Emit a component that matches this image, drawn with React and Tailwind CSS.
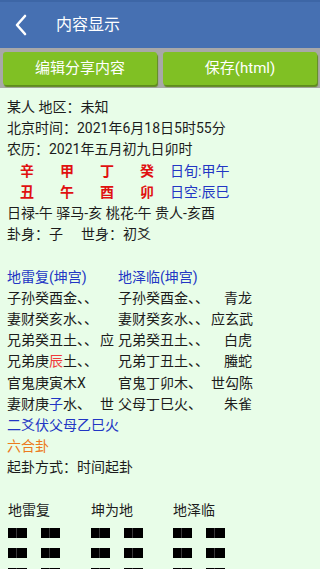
import React from "react";

const FONT = { fontFamily: 'Roboto, "Noto Sans CJK SC", "Noto Sans", sans-serif' };

function Yin() {
  return (
    <div className="flex gap-[14px]">
      <div className="flex w-[19px] h-[10px]">
        <div className="w-[9px] h-full bg-black border-r border-[#3a3a3a]" />
        <div className="w-[10px] h-full bg-black" />
      </div>
      <div className="flex w-[19px] h-[10px]">
        <div className="w-[9px] h-full bg-black border-r border-[#3a3a3a]" />
        <div className="w-[10px] h-full bg-black" />
      </div>
    </div>
  );
}

function Yang() {
  return <div className="w-[52px] h-[10px] bg-black" />;
}

function Hex({ lines }) {
  return (
    <div className="flex flex-col gap-[10px]">
      {lines.map((l, i) => (l ? <Yang key={i} /> : <Yin key={i} />))}
    </div>
  );
}

function YaoRow({ a, m, b, c }) {
  return (
    <div className="flex whitespace-pre">
      <span className="w-[93px]">{a}</span>
      <span className="w-[18px]">{m}</span>
      <span className="w-[93px]">{b}</span>
      <span className="w-[41px] text-right">{c}</span>
    </div>
  );
}

export default function App() {
  return (
    <div className="w-[320px] h-[569px] overflow-hidden bg-[#e8fde8]" style={FONT}>
      <div className="h-[48px] bg-[#4670b2] flex items-center border-t-2 border-[#3d66a6]">
        <svg width="14" height="22" viewBox="0 0 14 22" className="ml-[14px]">
          <path d="M11 2 L3 11 L11 20" fill="none" stroke="white" strokeWidth="2.6" strokeLinecap="round" strokeLinejoin="round" />
        </svg>
        <span className="ml-[28px] text-white text-[16px] leading-none">内容显示</span>
      </div>
      <div className="h-[40px] bg-[#a8a8a8] flex gap-[6px] px-[3px] pt-[4px] pb-[3px]">
        <div className="flex-1 rounded-[3px] bg-[#80c024] shadow-[1px_2px_1px_#5f8c1c] flex items-center justify-center text-white text-[15px]">
          编辑分享内容
        </div>
        <div className="flex-1 rounded-[3px] bg-[#80c024] shadow-[1px_2px_1px_#5f8c1c] flex items-center justify-center text-white text-[15px]">
          保存(html)
        </div>
      </div>
      <div className="pl-[7px] pt-[9px] text-[14px] leading-[21.2px] text-[#1c1c1c]">
        <div>某人 地区：未知</div>
        <div>北京时间：2021年6月18日5时55分</div>
        <div>农历：2021年五月初九日卯时</div>
        <div className="flex">
          <span className="w-[40px] text-center text-[#e01010] font-bold">辛</span>
          <span className="w-[40px] text-center text-[#e01010] font-bold">甲</span>
          <span className="w-[40px] text-center text-[#e01010] font-bold">丁</span>
          <span className="w-[40px] text-center text-[#e01010] font-bold">癸</span>
          <span className="ml-[3px] text-[#2236c4]">日旬:甲午</span>
        </div>
        <div className="flex">
          <span className="w-[40px] text-center text-[#e01010] font-bold">丑</span>
          <span className="w-[40px] text-center text-[#e01010] font-bold">午</span>
          <span className="w-[40px] text-center text-[#e01010] font-bold">酉</span>
          <span className="w-[40px] text-center text-[#e01010] font-bold">卯</span>
          <span className="ml-[3px] text-[#2236c4]">日空:辰巳</span>
        </div>
        <div>日禄-午 驿马-亥 桃花-午 贵人-亥酉</div>
        <div className="flex">
          <span>卦身：子</span>
          <span className="ml-[18px]">世身：初爻</span>
        </div>
        <div className="h-[21.2px]" />
        <div className="flex text-[#2236c4]">
          <span className="w-[111px]">地雷复(坤宫)</span>
          <span>地泽临(坤宫)</span>
        </div>
        <YaoRow a="子孙癸酉金、、" m="" b="子孙癸酉金、、" c="青龙" />
        <YaoRow a="妻财癸亥水、、" m="" b="妻财癸亥水、、" c="应玄武" />
        <YaoRow a="兄弟癸丑土、、" m="应" b="兄弟癸丑土、、" c="白虎" />
        <YaoRow
          a={<>兄弟庚<span className="text-[#f03c3c]">辰</span>土、、</>}
          m=""
          b="兄弟丁丑土、、"
          c="螣蛇"
        />
        <YaoRow a="官鬼庚寅木X" m="" b="官鬼丁卯木、" c="世勾陈" />
        <YaoRow
          a={<>妻财庚<span className="text-[#2236c4]">子</span>水、</>}
          m="世"
          b="父母丁巳火、"
          c="朱雀"
        />
        <div className="text-[#2236c4]">二爻伏父母乙巳火</div>
        <div className="text-[#ec7a20]">六合卦</div>
        <div>起卦方式：时间起卦</div>
        <div className="h-[21.2px]" />
      </div>
      <div className="pl-[8px] text-[14px] leading-[21.2px] text-[#1c1c1c]">
        <div className="flex">
          <div className="w-[83px] flex flex-col">
            <span>地雷复</span>
            <div className="mt-[7px]">
              <Hex lines={[0, 0, 0, 0, 0, 1]} />
            </div>
          </div>
          <div className="w-[82px] flex flex-col">
            <span>坤为地</span>
            <div className="mt-[7px]">
              <Hex lines={[0, 0, 0, 0, 0, 0]} />
            </div>
          </div>
          <div className="w-[82px] flex flex-col">
            <span>地泽临</span>
            <div className="mt-[7px]">
              <Hex lines={[0, 0, 0, 0, 1, 1]} />
            </div>
          </div>
        </div>
      </div>
    </div>
  );
}
